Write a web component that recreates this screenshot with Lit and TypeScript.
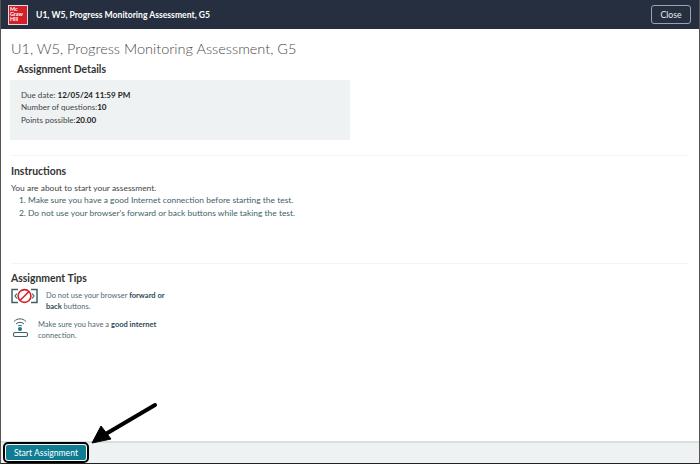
import { LitElement, html, css } from "lit";
import { customElement } from "lit/decorators.js";

@customElement("app-root")
class AppRoot extends LitElement {
  static styles = css`
    :host { display: block; width: 700px; height: 464px; position: relative; overflow: hidden; background: #fff; font-family: "Lato", "Open Sans", sans-serif; color: #333; box-sizing: border-box; border-left: 1px solid #555; border-right: 1px solid #555; border-bottom: 1px solid #222; }
    .page { display: flex; flex-direction: column; height: 100%; }
    .top { height: 29px; flex: none; background: #252f3f; display: flex; align-items: center; padding: 0 8px 0 7px; gap: 8px; color: #fff; font-size: 8.6px; font-weight: 700; }
    .logo { width: 20px; height: 20px; background: #d4202a; outline: 1px solid #ddd; outline-offset: -1px; color: #fff; font-size: 5.4px; line-height: 5.4px; padding: 2px 0 0 2px; box-sizing: border-box; font-weight: 700; flex: none; }
    .title { flex: 1; }
    .close { width: 40px; height: 19px; box-sizing: border-box; border: 1px solid #9aa3ad; border-radius: 3px; color: #e8ebee; font-size: 8.7px; font-weight: 400; display: flex; align-items: center; justify-content: center; }
    .main { flex: 1; padding: 11px 10px 0; min-height: 0; }
    h1 { margin: 0; font-size: 14.5px; line-height: 17px; font-weight: 300; color: #4a4a4a; }
    h2 { margin: 0; font-size: 10.4px; line-height: 14px; font-weight: 700; color: #333; }
    .details h2 { padding: 5px 0 0 6px; }
    .box { width: 340px; height: 60px; margin: 4px 0 0 -1px; background: #eff2f3; box-sizing: border-box; padding: 9px 11px; font-size: 8.05px; line-height: 12.4px; color: #444; }
    .box b { color: #222; }
    .instructions { margin-top: 15px; padding-top: 8px; height: 98px; font-size: 8.45px; border-top: 1px solid #f3f4f5; box-sizing: border-box; }
    .instructions p { margin: 4px 0 0; line-height: 12px; color: #444; }
    ol { margin: 0; padding: 0 0 0 17px; color: #3f5f69; line-height: 12.5px; }
    .tips { border-top: 1px solid #f3f4f5; padding-top: 7px; margin-top: 10px; }
    .tip { display: flex; align-items: flex-start; font-size: 7.5px; line-height: 11px; color: #4f6a73; }
    .tip b { color: #2c4a55; }
    .tip.a { margin-top: 3px; gap: 8px; }
    .tip.b { margin-top: 5px; gap: 9px; }
    .tip span { width: 124px; padding-top: 2px; }
    .bar { height: 22px; flex: none; box-sizing: border-box; background: #eff2f3; border-top: 2px solid #d9dee0; padding: 1px 0 0 4px; }
    .start { width: 82px; height: 17px; box-sizing: border-box; border: 1px solid #fff; outline: 2px solid #000; border-radius: 3px; background: #0e7c92; color: #fff; font-size: 8.6px; display: flex; align-items: center; justify-content: center; }
    .arrow { position: absolute; left: 85px; top: 398px; }
  `;

  render() {
    return html`<div class="page">
      <div class="top">
        <div class="logo">Mc<br />Graw<br />Hill</div>
        <div class="title">U1, W5, Progress Monitoring Assessment, G5</div>
        <div class="close">Close</div>
      </div>
      <div class="main">
        <h1>U1, W5, Progress Monitoring Assessment, G5</h1>
        <div class="details">
          <h2>Assignment Details</h2>
          <div class="box">
            Due date: <b>12/05/24 11:59 PM</b><br />
            Number of questions:<b>10</b><br />
            Points possible:<b>20.00</b>
          </div>
        </div>
        <div class="instructions">
          <h2>Instructions</h2>
          <p>You are about to start your assessment.</p>
          <ol>
            <li>Make sure you have a good Internet connection before starting the test.</li>
            <li>Do not use your browser's forward or back buttons while taking the test.</li>
          </ol>
        </div>
        <div class="tips">
          <h2>Assignment Tips</h2>
          <div class="tip a">
            <svg width="27" height="20" viewBox="0 0 27 20" fill="none">
              <path d="M7 1.5H1V14.5H7M20 1.5H26V14.5H20" stroke="#3f5f69" stroke-width="1.5" />
              <path d="M6 5.5L4 8L6 10.5M21 5.5L23 8L21 10.5" stroke="#3f5f69" stroke-width="1.2" />
              <circle cx="13.5" cy="8" r="6.4" stroke="#d4202a" stroke-width="1.6" fill="#fff" />
              <path d="M9 12.5L18 3.5" stroke="#d4202a" stroke-width="1.6" />
            </svg>
            <span>Do not use your browser <b>forward or</b><br /><b>back</b> buttons.</span>
          </div>
          <div class="tip b">
            <svg width="18" height="22" viewBox="0 0 18 22" fill="none">
              <path d="M3 4.5C6.5 1 11.5 1 15 4.5M5 7C7.5 4.8 10.5 4.8 13 7M7 9C8 8.2 10 8.2 11 9" stroke="#3f5f69" stroke-width="1" />
              <circle cx="9" cy="12" r="2" fill="#0e7c92" />
              <rect x="2.5" y="15.5" width="14" height="4" rx="1.5" stroke="#3f5f69" stroke-width="1.1" />
            </svg>
            <span>Make sure you have a <b>good internet</b> connection.</span>
          </div>
        </div>
      </div>
      <div class="bar"><div class="start">Start Assignment</div></div>
    </div>
    <svg class="arrow" width="76" height="48" viewBox="0 0 76 48">
      <path d="M69 7L18 37" stroke="#000" stroke-width="4" stroke-linecap="round" />
      <path d="M6 45L15 28L25 41Z" fill="#000" stroke="#000" stroke-linejoin="round" />
    </svg>`;
  }
}
